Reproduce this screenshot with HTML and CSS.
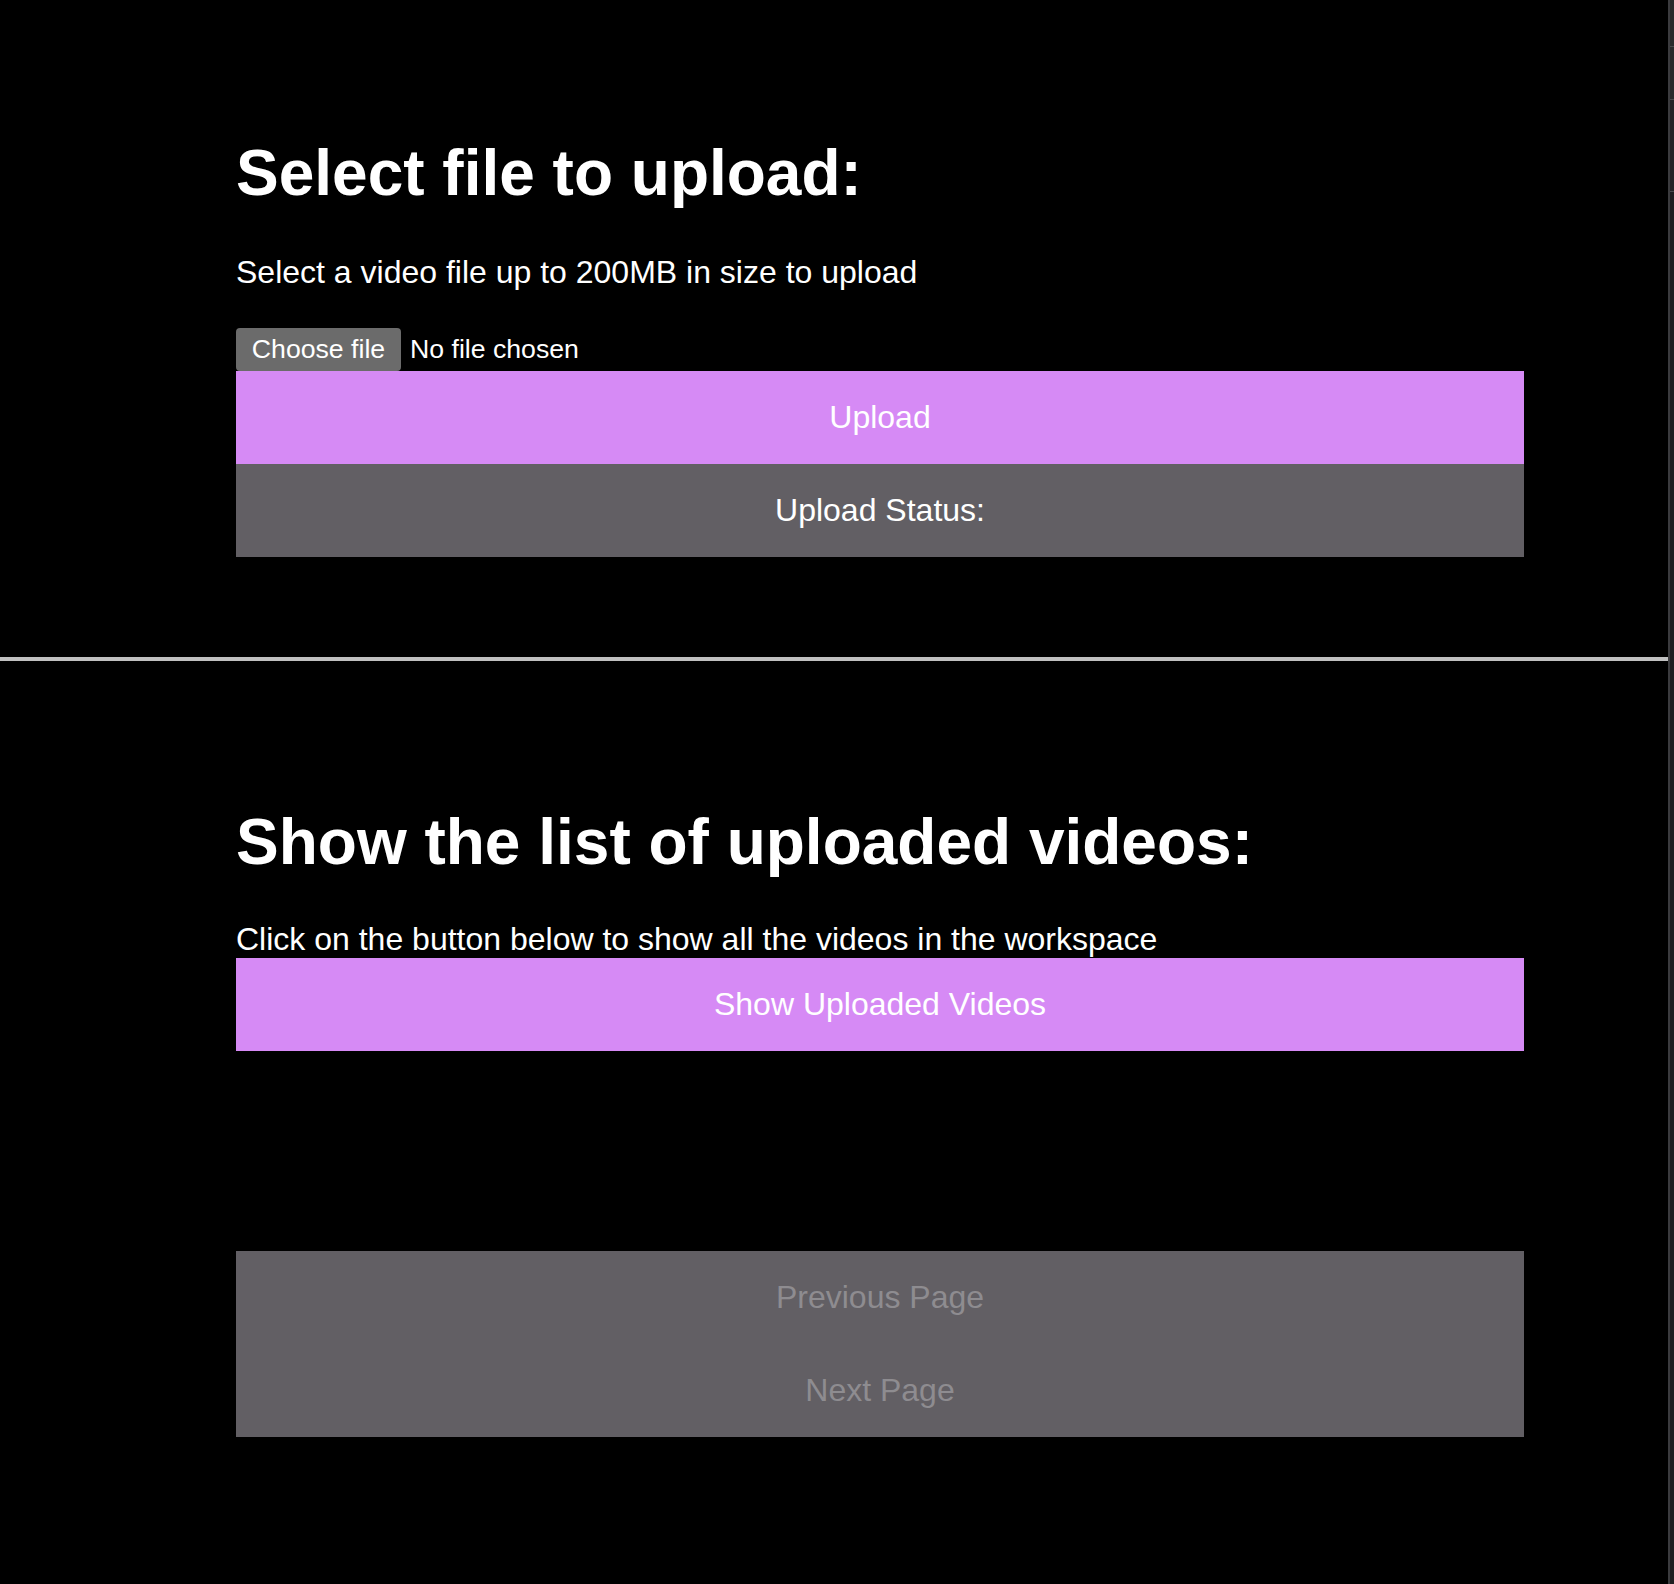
FILE: index.html
```html
<!DOCTYPE html>
<html lang="en">
<head>
<meta charset="utf-8">
<title>Video upload</title>
<link rel="stylesheet" href="styles.css">
</head>
<body>
<div class="window">
  <main class="page">
    <section class="section section-upload">
      <div class="content">
        <h1 class="title">Select file to upload:</h1>
        <p class="lead">Select a video file up to 200MB in size to upload</p>
        <div class="file-row">
          <span class="file-btn">Choose file</span>
          <span class="file-name">No file chosen</span>
        </div>
        <button class="bar bar-primary" type="button">Upload</button>
        <div class="bar bar-status">Upload Status:</div>
      </div>
    </section>
    <hr class="divider">
    <section class="section section-list">
      <div class="content">
        <h2 class="title">Show the list of uploaded videos:</h2>
        <p class="lead lead-tight">Click on the button below to show all the videos in the workspace</p>
        <button class="bar bar-primary" type="button">Show Uploaded Videos</button>
        <div class="video-list"></div>
        <div class="pager">
          <button class="bar bar-disabled" type="button" disabled>Previous Page</button>
          <button class="bar bar-disabled" type="button" disabled>Next Page</button>
        </div>
      </div>
    </section>
  </main>
  <div class="scrollbar">
    <div class="scroll-seg scroll-seg-a"></div>
    <div class="scroll-seg scroll-seg-b"></div>
    <div class="scroll-seg scroll-seg-c"></div>
  </div>
</div>
</body>
</html>
```

FILE: styles.css
```css
html, body {
  margin: 0;
  padding: 0;
  background: #000;
}

body {
  font-family: "Liberation Sans", Arial, Helvetica, sans-serif;
  color: #fff;
}

.window {
  display: flex;
  height: 1584px;
  overflow: hidden;
}

.page {
  flex: 1;
  min-width: 0;
}

.content {
  margin-left: 236px;
  width: 1288px;
}

.section-upload {
  padding: 136px 0 100px;
}

.section-list {
  padding: 144px 0 0;
}

.title {
  margin: 0;
  font-size: 64px;
  line-height: 74px;
  font-weight: bold;
}

.lead {
  margin: 44px 0 0;
  font-size: 32px;
  line-height: 37px;
}

.lead-tight {
  margin-top: 42px;
}

.file-row {
  display: flex;
  align-items: center;
  margin-top: 37px;
  height: 43px;
}

.file-btn {
  display: flex;
  align-items: center;
  justify-content: center;
  width: 165px;
  height: 43px;
  box-sizing: border-box;
  background: #6b6b6b;
  border-radius: 4px;
  font-size: 26.67px;
  color: #fff;
}

.file-name {
  margin-left: 9px;
  font-size: 26.67px;
  line-height: 43px;
}

.bar {
  display: flex;
  align-items: center;
  justify-content: center;
  width: 100%;
  height: 93px;
  margin: 0;
  padding: 0;
  border: 0;
  font-family: inherit;
  font-size: 32px;
  color: #fff;
}

.bar-primary {
  background: #d68af5;
}

.bar-status {
  background: #625f64;
}

.bar-disabled {
  background: #625f64;
  color: #8e8c90;
}

.divider {
  margin: 0;
  border: 0;
  height: 4px;
  background: #c0c0c0;
}

.video-list {
  height: 200px;
}

.pager {
  display: flex;
  flex-direction: column;
}

.scrollbar {
  width: 4px;
  border-left: 2px solid #3b3b3e;
  background: #1f1f21;
  display: flex;
  flex-direction: column;
}

.scroll-seg {
  border-bottom: 1px solid #4a4a4d;
}

.scroll-seg-a {
  height: 46px;
  background: #2a2a2c;
}

.scroll-seg-b {
  height: 52px;
  background: #2a2a2c;
}

.scroll-seg-c {
  height: 91px;
  background: #242426;
}
```
